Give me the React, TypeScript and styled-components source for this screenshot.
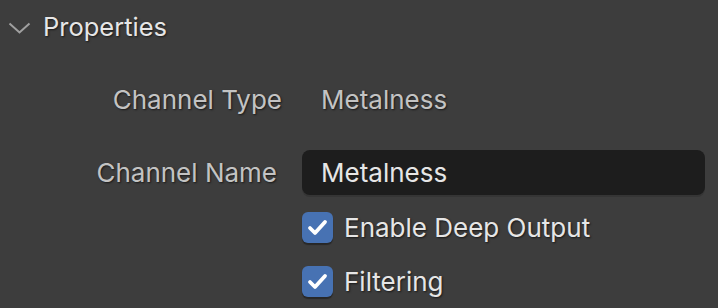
import styled, {createGlobalStyle} from "styled-components";

const Global = createGlobalStyle`
  html, body {
    margin: 0;
    padding: 0;
    background: #3d3d3d;
  }
  body {
    width: 718px;
    height: 308px;
    overflow: hidden;
    font-family: Inter, "Noto Sans", sans-serif;
  }
`;

const Panel = styled.div`
  width: 718px;
  height: 308px;
  background: #3d3d3d;
  display: flex;
  flex-direction: column;
`;

const Header = styled.div`
  height: 54px;
  display: flex;
  align-items: center;
  padding-left: 8px;
  gap: 12px;
  color: #e6e6e6;
  font-size: 25.5px;
  text-shadow: 1px 1px 2px rgba(0, 0, 0, 0.6);
`;

const Chevron = styled.svg`
  width: 23px;
  height: 12px;
  margin-top: 2px;
`;

const Row = styled.div<{ $h: number }>`
  height: ${p => p.$h}px;
  display: grid;
  grid-template-columns: 302px 403px;
  align-items: center;
`;

const Label = styled.div<{ $pr: number }>`
  text-align: right;
  padding-right: ${p => p.$pr}px;
  color: #c3c3c3;
  font-size: 26px;
  text-shadow: 1px 1px 2px rgba(0, 0, 0, 0.6);
`;

const Value = styled.div`
  padding-left: 19px;
  color: #c3c3c3;
  font-size: 26px;
  text-shadow: 1px 1px 2px rgba(0, 0, 0, 0.6);
`;

const Field = styled.div`
  height: 45px;
  border-radius: 8px;
  background: #1d1d1d;
  box-shadow: 0 2px 0 #353535;
  display: flex;
  align-items: center;
  padding-left: 19px;
  color: #e6e6e6;
  font-size: 26px;
`;

const Check = styled.label`
  grid-column: 2;
  display: flex;
  align-items: center;
  gap: 11px;
  color: #e6e6e6;
  font-size: 26px;
  text-shadow: 1px 1px 2px rgba(0, 0, 0, 0.6);
`;

const Box = styled.span`
  width: 31px;
  height: 31px;
  border-radius: 6px;
  background: #4772b3;
  box-shadow: 0 2px 1px rgba(0, 0, 0, 0.35);
  display: flex;
  align-items: center;
  justify-content: center;
`;

const Tick = () => (
  <svg width="21" height="17" viewBox="0 0 21 17">
    <path d="M3 9 L8 14 L18 3" fill="none" stroke="#fff" strokeWidth="3.8" strokeLinecap="round" strokeLinejoin="round"/>
  </svg>
);

export default function App() {
  return (
    <>
      <Global/>
      <Panel>
        <Header>
          <Chevron viewBox="0 0 23 12">
            <path d="M1.5 1.5 L11.5 10.5 L21.5 1.5" fill="none" stroke="#a0a0a0" strokeWidth="2"/>
          </Chevron>
          Properties
        </Header>
        <Row $h={92}>
          <Label $pr={20}>Channel Type</Label>
          <Value>Metalness</Value>
        </Row>
        <Row $h={55}>
          <Label $pr={25}>Channel Name</Label>
          <Field>Metalness</Field>
        </Row>
        <Row $h={54}>
          <Check><Box><Tick/></Box>Enable Deep Output</Check>
        </Row>
        <Row $h={54}>
          <Check><Box><Tick/></Box>Filtering</Check>
        </Row>
      </Panel>
    </>
  );
}
